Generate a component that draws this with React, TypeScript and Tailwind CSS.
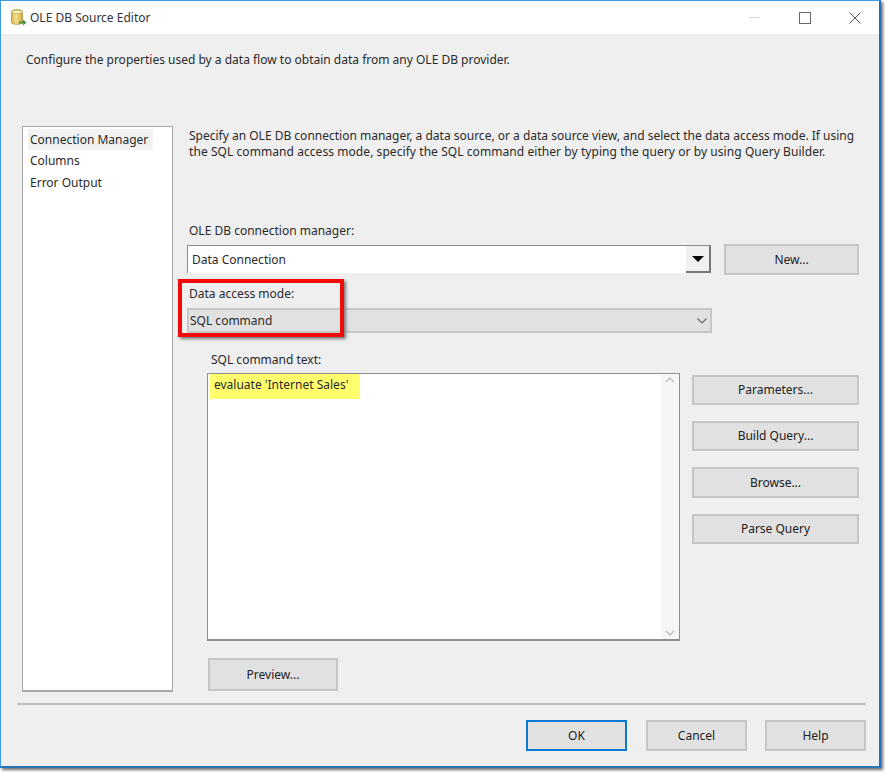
const font = "font-['Noto_Sans','Open_Sans',sans-serif]";

function DbIcon() {
  return (
    <svg width="16" height="17" viewBox="0 0 16 17" className="ml-[10px] -mt-[1px] shrink-0">
      <defs>
        <linearGradient id="can" x1="0" x2="1" y1="0" y2="0">
          <stop offset="0" stopColor="#d9b548" />
          <stop offset="0.4" stopColor="#f6e08e" />
          <stop offset="1" stopColor="#d2a93c" />
        </linearGradient>
      </defs>
      <path d="M0.5 3c0-3.4 11-3.4 11 0v10.5c0 2.4-11 2.4-11 0z" fill="url(#can)" stroke="#a98a35" strokeWidth="0.7" />
      <ellipse cx="6" cy="3" rx="5.2" ry="1.7" fill="#fbf0bd" stroke="#b79a45" strokeWidth="0.5" />
      <path d="M8 12.5h4v-2l3.6 3-3.6 3v-2H8z" fill="#4c9a3c" />
    </svg>
  );
}

function Btn({ label, className = "" }: { label: string; className?: string }) {
  return (
    <div className={`flex items-center justify-center bg-[#e1e1e1] border-2 border-[#c6c6c6] text-[12px] text-[#222] ${className}`}>
      {label}
    </div>
  );
}

export default function App() {
  return (
    <div className={`relative w-[885px] h-[772px] overflow-hidden bg-white text-[12px] leading-[16px] text-[#2a2a2a] ${font}`}>
      <div className="w-[881px] h-[768px] flex flex-col bg-[#efefef] border-t border-l border-[#3f9be6] border-r-2 border-r-[#1f6fc0] border-b-2 border-b-[#2a75b8] shadow-[2px_2px_3px_#6b6b6b]">
        {/* Title bar */}
        <div className="h-[33px] bg-white flex items-center shrink-0">
          <DbIcon />
          <span className="ml-[3px] text-[12px] text-[#333]">OLE DB Source Editor</span>
          <div className="ml-auto flex items-center">
            <div className="w-[11px] h-px bg-[#d4d4d4]" />
            <div className="ml-[39px] w-[12px] h-[12px] border-[1.5px] border-[#666]" />
            <svg width="12" height="12" viewBox="0 0 12 12" className="ml-[38px] mr-[18px]">
              <path d="M0.5 0.5l11 11M11.5 0.5l-11 11" stroke="#555" strokeWidth="1" fill="none" />
            </svg>
          </div>
        </div>

        <p className="ml-[25px] mt-[18px] h-[16px] shrink-0 whitespace-nowrap">
          Configure the properties used by a data flow to obtain data from any OLE DB provider.
        </p>

        {/* Main */}
        <div className="ml-[21px] mt-[58px] flex h-[566px] shrink-0">
          <div className="w-[151px] h-full bg-white border border-[#a6a6ab] border-b-2 pl-[5px] pt-[2px] shrink-0">
            <div className="w-[125px] h-[21px] leading-[21px] bg-[#f2f2f2] pl-[2px] whitespace-nowrap">Connection Manager</div>
            <div className="h-[22px] leading-[22px] pl-[2px]">Columns</div>
            <div className="h-[21px] leading-[21px] pl-[2px]">Error Output</div>
          </div>

          <div className="ml-[14px] w-[673px] flex flex-col">
            <p className="ml-[2px] mt-[2px] leading-[16px] whitespace-nowrap">
              Specify an OLE DB connection manager, a data source, or a data source view, and select the data access mode. If using
              <br />
              <span className="tracking-[0.065px]">the SQL command access mode, specify the SQL command either by typing the query or by using Query Builder.</span>
            </p>

            <div className="ml-[2px] mt-[63px] h-[16px]">OLE DB connection manager:</div>

            <div className="mt-[5px] flex items-start">
              <div className="mt-[1px] w-[524px] h-[28px] bg-white border-l border-t border-[#8a8a8a] flex items-center pl-[4px] relative">
                Data Connection
                <div className="absolute right-0 top-0 w-[25px] h-[27px] bg-[#f0f0f0] border-r-2 border-b-2 border-[#777] flex items-center justify-center">
                  <div className="w-0 h-0 border-l-[6px] border-r-[6px] border-t-[6px] border-l-transparent border-r-transparent border-t-black" />
                </div>
              </div>
              <Btn label="New..." className="ml-[13px] w-[135px] h-[31px]" />
            </div>

            <div className="ml-[2px] mt-[11px] h-[16px]">Data access mode:</div>

            <div className="mt-[6px] w-[525px] h-[25px] bg-[#e1e1e1] border-2 border-[#c6c6c6] flex items-center pl-[1px]">
              SQL command
              <svg width="10" height="6" viewBox="0 0 10 6" className="ml-auto mr-[3px]">
                <path d="M0.5 0.5L5 5l4.5-4.5" stroke="#666" strokeWidth="1.1" fill="none" />
              </svg>
            </div>

            <div className="ml-[24px] mt-[19px] h-[16px]">SQL command text:</div>

            <div className="mt-[5px] flex items-start">
              <div className="ml-[20px] w-[473px] h-[268px] bg-white border border-[#8f8f8f] border-b-2 flex justify-between shrink-0">
                <div className="ml-[2px] w-[150px] h-[25px] bg-[#ffff6e] pl-[4px] leading-[22px] whitespace-nowrap">evaluate 'Internet Sales'</div>
                <div className="w-[18px] h-full bg-[#f6f6f6] flex flex-col justify-between items-center py-[3px]">
                  <svg width="10" height="6" viewBox="0 0 10 6">
                    <path d="M1 5l4-4 4 4" stroke="#bdbdbd" strokeWidth="1.4" fill="none" />
                  </svg>
                  <svg width="10" height="6" viewBox="0 0 10 6">
                    <path d="M1 1l4 4 4-4" stroke="#bdbdbd" strokeWidth="1.4" fill="none" />
                  </svg>
                </div>
              </div>
              <div className="ml-[12px] mt-[2px] flex flex-col">
                <Btn label="Parameters..." className="w-[167px] h-[30px]" />
                <Btn label="Build Query..." className="mt-[16px] w-[167px] h-[30px]" />
                <Btn label="Browse..." className="mt-[16px] w-[167px] h-[31px]" />
                <Btn label="Parse Query" className="mt-[16px] w-[167px] h-[30px]" />
              </div>
            </div>

            <Btn label="Preview..." className="ml-[21px] mt-[17px] w-[130px] h-[33px]" />
          </div>
        </div>

        <div className="ml-[16px] mt-[11px] w-[849px] h-[2px] bg-[#bdbdbd] shrink-0" />

        {/* Footer */}
        <div className="ml-[525px] mt-[15px] flex">
          <Btn label="OK" className="w-[101px] h-[31px] !border-[#0a7ad6]" />
          <Btn label="Cancel" className="ml-[19px] w-[101px] h-[31px]" />
          <Btn label="Help" className="ml-[18px] w-[101px] h-[31px]" />
        </div>
      </div>

      {/* Red annotation box */}
      <div className="absolute left-[178px] top-[279px] w-[166px] h-[58px] border-4 border-[#f00a0a] shadow-[2px_2px_3px_#777]" />
    </div>
  );
}
